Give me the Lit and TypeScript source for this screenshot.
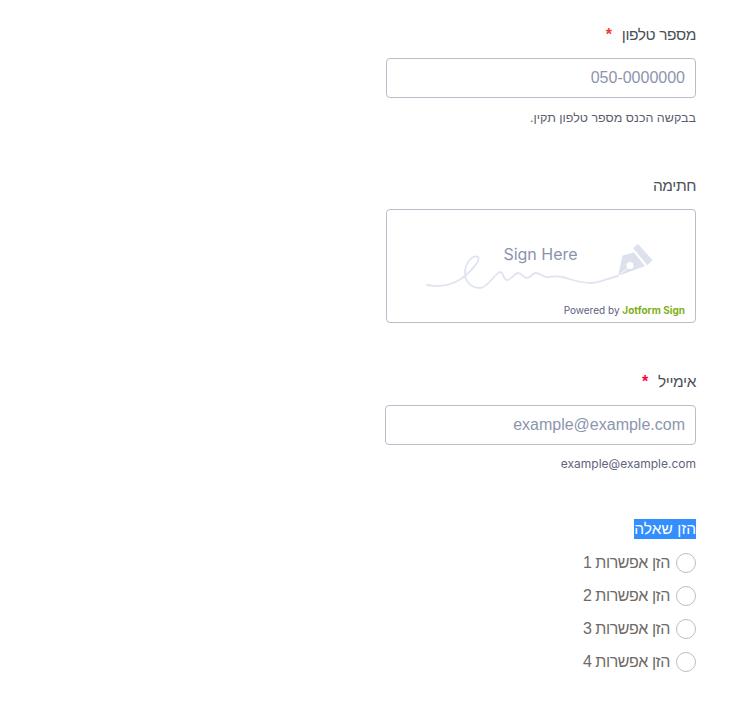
import { html, css, LitElement } from "lit";
import { customElement } from "lit/decorators.js";

const OPTIONS = ["הזן אפשרות 1", "הזן אפשרות 2", "הזן אפשרות 3", "הזן אפשרות 4"];

@customElement("sign-pad")
export class SignPad extends LitElement {
  static styles = css`
    :host {
      display: block;
      position: relative;
      box-sizing: border-box;
      width: 310px;
      height: 114px;
      border: 1px solid #b8bdc9;
      border-radius: 4px;
      background: #fff;
      direction: ltr;
    }

    svg {
      display: block;
      width: 308px;
      height: 112px;
    }

    .hint {
      position: absolute;
      top: 34px;
      left: 0;
      width: 307px;
      text-align: center;
      font: 400 16px/20px Inter, sans-serif;
      color: #8a93ad;
    }

    .powered {
      position: absolute;
      right: 10px;
      bottom: 5px;
      font: 400 10px/14px Inter, sans-serif;
      color: #5b6180;
    }

    .powered b {
      font-weight: 700;
      color: #7fb01a;
    }
  `;

  render() {
    // viewBox is in page pixels so the stroke points could be read off the reference
    return html`
      <svg viewBox="387 210 308 112" aria-hidden="true">
        <path
          d="M427 285 C442 288 455 284 465 276 C472 270 481 260 478 257 C473 254 465 263 465 272 C465 283 472 288 480 288 C488 288 494 274 500 272 C504 272 503 280 507 280 C512 280 514 273 518 273 C522 273 523 278 527 278 C531 278 532 273 536 273 C541 273 543 278 549 277 C554 276 558 276 562 277 C569 278 576 283 592 283 C600 282 609 278 618 276"
          fill="none"
          stroke="#e0e4ef"
          stroke-width="1.800"
          stroke-linecap="round"
        />
        <path d="M618 276 L622.500 255.500 L634 252.500 L645 266 Z" fill="#dde1ed" />
        <path d="M638 244 L652.500 260 L647.500 265.500 L633 248 Z" fill="#dde1ed" />
        <path d="M618 276 L629 267" stroke="#fff" stroke-width="0.800" />
        <circle cx="630" cy="265.500" r="3.500" fill="#fff" />
      </svg>
      <div class="hint">Sign Here</div>
      <div class="powered">Powered by <b>Jotform Sign</b></div>
    `;
  }
}

@customElement("app-root")
export class AppRoot extends LitElement {
  static styles = css`
    :host {
      display: block;
      height: 711px;
      overflow: hidden;
      background: #fff;
      font-family: "Liberation Sans", Arial, sans-serif;
    }

    .form {
      display: flex;
      flex-direction: column;
      align-items: flex-start;
      padding: 25px 36px 0 0;
      direction: rtl;
    }

    .field {
      display: flex;
      flex-direction: column;
      align-items: flex-start;
    }

    .label {
      font-size: 15.5px;
      letter-spacing: -0.4px;
      line-height: 20px;
      color: #4d5059;
    }

    .req {
      margin-right: 6px;
      font-size: 16px;
      font-weight: 700;
      letter-spacing: 0;
      color: #f23a3c;
    }

    .req.pink {
      color: #ff0040;
    }

    input.text {
      box-sizing: border-box;
      width: 310px;
      height: 40px;
      margin-top: 13px;
      padding: 0 10px;
      border: 1px solid #b8bdc9;
      border-radius: 4px;
      background: #fff;
      font: 16px "Liberation Sans", Arial, sans-serif;
      text-align: right;
      direction: ltr;
      outline: none;
    }

    input.text.wide {
      width: 311px;
    }

    input.text::placeholder {
      color: #8c95ad;
      opacity: 1;
    }

    .sub {
      margin-top: 12px;
      font-size: 12.5px;
      line-height: 16px;
      color: #5b5e6e;
    }

    .sub.inter {
      margin-top: 11px;
      font-family: Inter, sans-serif;
      font-size: 12px;
      color: #61647a;
    }

    .selected {
      display: block;
      background: #338fff;
      color: #fff;
      font-size: 15.5px;
      letter-spacing: 0;
    }

    .options {
      display: flex;
      flex-direction: column;
      gap: 13px;
      margin-top: 14px;
    }

    .option {
      display: flex;
      align-items: center;
      gap: 6px;
      font-size: 16px;
      letter-spacing: -0.45px;
      line-height: 20px;
      color: #6f6a68;
    }

    .radio {
      box-sizing: border-box;
      width: 20px;
      height: 20px;
      border: 1px solid #b8bdc9;
      border-radius: 50%;
      background: #fff;
    }

    .signature {
      margin-top: 50px;
    }

    .signature sign-pad {
      margin-top: 13px;
    }

    .email {
      margin-top: 49px;
    }

    .question {
      margin-top: 47px;
    }
  `;

  render() {
    return html`
      <div class="form">
        <div class="field">
          <div class="label">מספר טלפון <span class="req">*</span></div>
          <input class="text" placeholder="050-0000000" />
          <div class="sub">בבקשה הכנס מספר טלפון תקין.</div>
        </div>

        <div class="field signature">
          <div class="label">חתימה</div>
          <sign-pad></sign-pad>
        </div>

        <div class="field email">
          <div class="label">אימייל <span class="req pink">*</span></div>
          <input class="text wide" placeholder="example@example.com" />
          <div class="sub inter">example@example.com</div>
        </div>

        <div class="field question">
          <div class="label"><span class="selected">הזן שאלה</span></div>
          <div class="options">
            ${OPTIONS.map(
              (o) => html`<div class="option">
                <span class="radio"></span>
                <span>${o}</span>
              </div>`
            )}
          </div>
        </div>
      </div>
    `;
  }
}
